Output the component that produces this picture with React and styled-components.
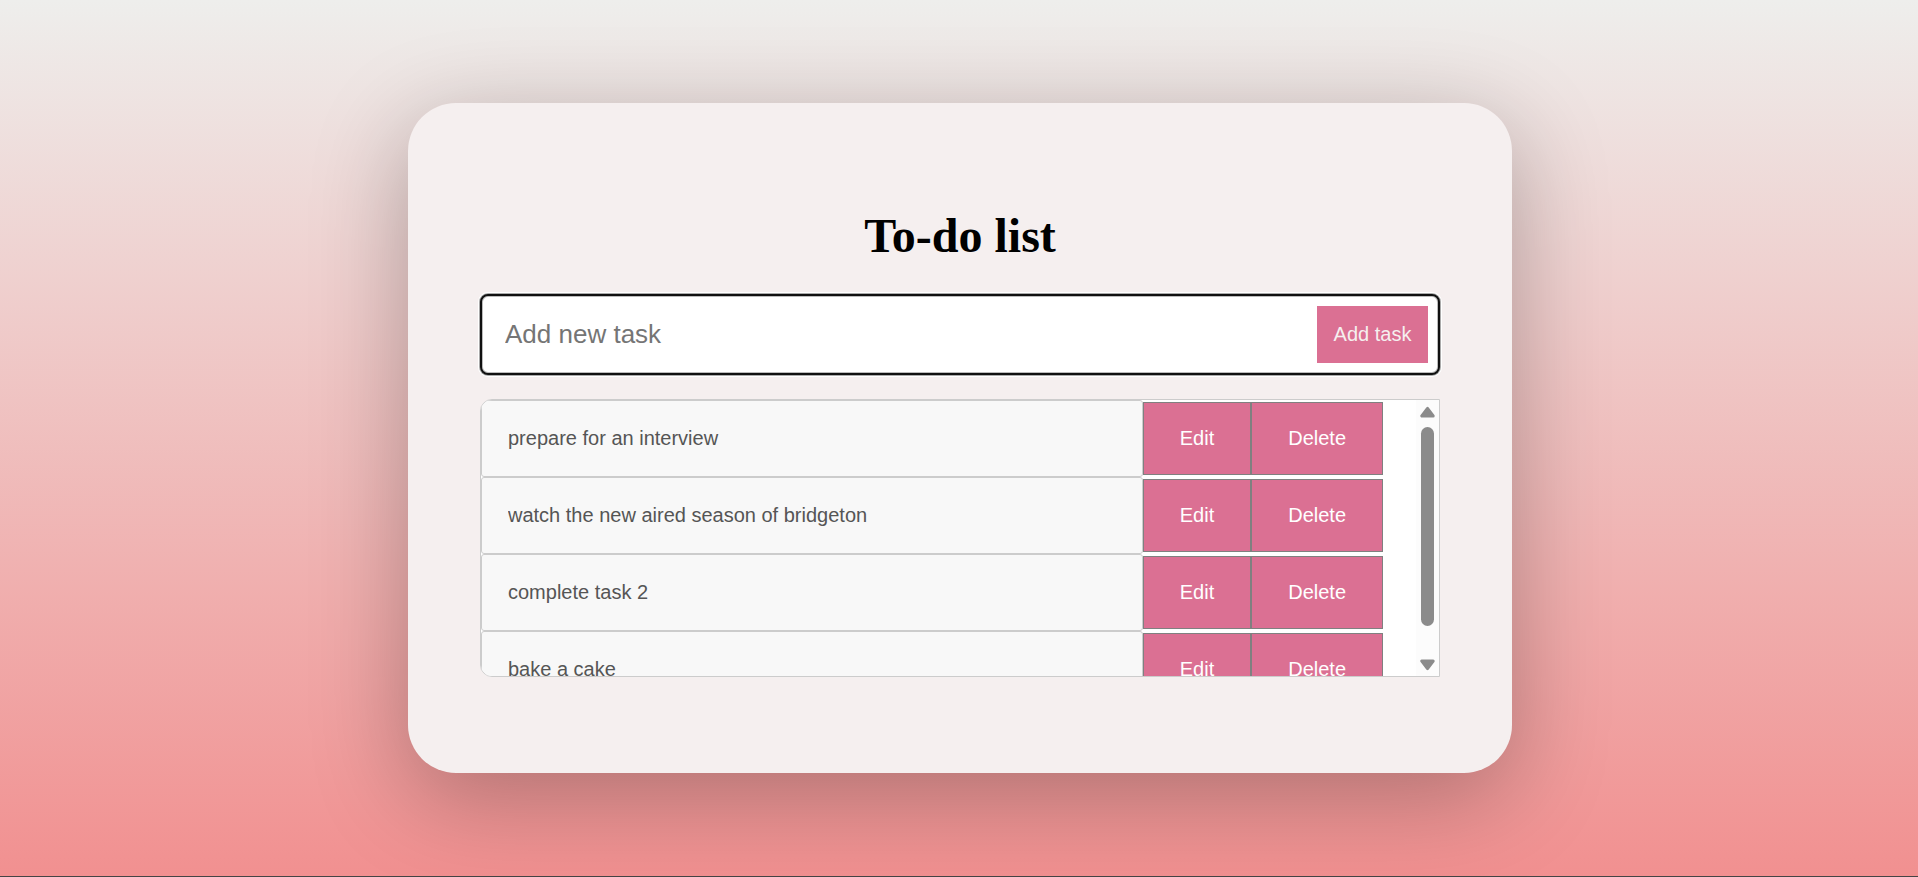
import React, { useState } from "react";
import styled, { createGlobalStyle } from "styled-components";

const GlobalStyle = createGlobalStyle`
  *, *::before, *::after { box-sizing: border-box; }
  body { margin: 0; }
`;

const sans = `"Liberation Sans", Arial, sans-serif`;

const Page = styled.main`
  min-height: 100vh;
  display: flex;
  align-items: center;
  justify-content: center;
  padding-left: 2px;
  border-bottom: 1px solid #444;
  background: linear-gradient(#eeeeec, #f19090);
`;

const Card = styled.section`
  width: 1104px;
  max-width: 100%;
  padding: 96px 72px;
  border-radius: 48px;
  background: #f5efef;
  box-shadow: 0 24px 96px rgba(0, 0, 0, 0.28);
`;

const Title = styled.h1`
  margin: 8px 0 29px;
  font: bold 48px/58px "Liberation Serif", "Times New Roman", serif;
  text-align: center;
  color: #000;
`;

const AddForm = styled.form`
  height: 81px;
  display: flex;
  align-items: center;
  padding: 0 10px 0 23px;
  margin-bottom: 24px;
  border: 2px solid #101010;
  border-radius: 8px;
  background: #fff;
  box-shadow: 0 0 0 1px #aaa, 0 0 0 2px #fff, inset 0 0 0 1px #bbb;
`;

const NewTask = styled.input`
  flex: 1;
  min-width: 0;
  padding: 0 0 2px;
  border: 0;
  outline: 0;
  background: none;
  font: 26px/32px ${sans};
  &::placeholder { color: #757575; }
`;

const Button = styled.button`
  flex: none;
  border: 0;
  padding: 0 16px 2px;
  min-width: 111px;
  height: 57px;
  background: palevioletred;
  color: #f5efef;
  font: 20px/24px ${sans};
  cursor: pointer;
`;

const RowButton = styled(Button)`
  min-width: 0;
  height: 73px;
  padding: 0 36px 2px;
  border: 1px solid gray;
  color: #fff;
`;

const Panel = styled.div`
  display: flex;
  height: 278px;
  border: 1px solid #ccc;
  border-radius: 12px 0 0 12px;
  background: #fff;
  overflow: hidden;
`;

const Tasks = styled.ul`
  flex: 1;
  min-width: 0;
  margin: 0;
  padding: 0;
  list-style: none;
  overflow: hidden;
`;

const Task = styled.li`
  display: flex;
  align-items: center;
  padding-right: 33px;
`;

const TaskText = styled.input`
  flex: 1;
  min-width: 0;
  height: 77px;
  padding: 0 26px;
  border: 1px solid #ccc;
  border-radius: 3px;
  outline: 0;
  background: #f8f8f8;
  color: #555;
  font: 20px/24px ${sans};
`;

const ScrollTrack = styled.div`
  flex: none;
  width: 23px;
  display: flex;
  flex-direction: column;
  align-items: center;
  padding: 6px 0 5px;
  background: #fcfcfc;
`;

const Thumb = styled.div`
  width: 13px;
  height: 199px;
  margin: 9px 0 auto;
  border-radius: 7px;
  background: #8b8b8b;
`;

const Arrow = ({ down }) => (
  <svg width="15" height="12" viewBox="0 0 15 12" aria-hidden="true">
    <path
      d={down ? "M1.8 2h11.4L7.5 9.6z" : "M1.8 10h11.4L7.5 2.4z"}
      fill="#8b8b8b"
      stroke="#8b8b8b"
      strokeWidth="3"
      strokeLinejoin="round"
    />
  </svg>
);

const initialTasks = [
  "prepare for an interview",
  "watch the new aired season of bridgeton",
  "complete task 2",
  "bake a cake",
];

export default function App() {
  const [tasks, setTasks] = useState(initialTasks);
  const [draft, setDraft] = useState("");

  const addTask = (event) => {
    event.preventDefault();
    if (draft.trim()) setTasks([...tasks, draft.trim()]);
    setDraft("");
  };

  return (
    <>
      <GlobalStyle />
      <Page>
        <Card>
          <Title>To-do list</Title>
          <AddForm onSubmit={addTask}>
            <NewTask
              aria-label="New task"
              placeholder="Add new task"
              value={draft}
              onChange={(event) => setDraft(event.target.value)}
            />
            <Button type="submit">Add task</Button>
          </AddForm>
          <Panel>
            <Tasks>
              {tasks.map((task, index) => (
                <Task key={index}>
                  <TaskText aria-label={`Task ${index + 1}`} value={task} readOnly />
                  <RowButton type="button">Edit</RowButton>
                  <RowButton
                    type="button"
                    onClick={() => setTasks(tasks.filter((_, i) => i !== index))}
                  >
                    Delete
                  </RowButton>
                </Task>
              ))}
            </Tasks>
            <ScrollTrack>
              <Arrow />
              <Thumb />
              <Arrow down />
            </ScrollTrack>
          </Panel>
        </Card>
      </Page>
    </>
  );
}
